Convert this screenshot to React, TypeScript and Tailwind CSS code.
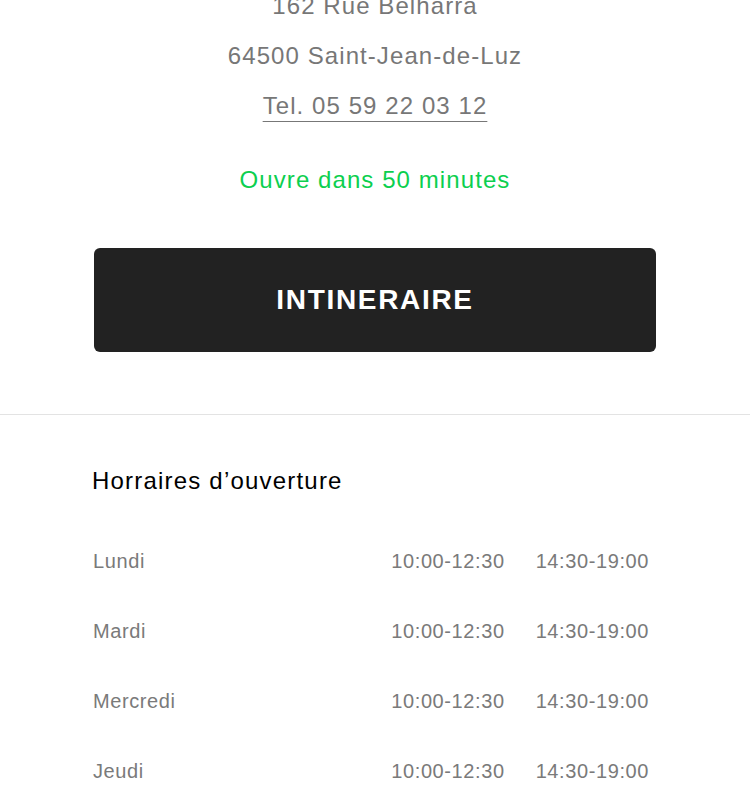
const hours = [
  { day: 'Lundi', am: '10:00-12:30', pm: '14:30-19:00' },
  { day: 'Mardi', am: '10:00-12:30', pm: '14:30-19:00' },
  { day: 'Mercredi', am: '10:00-12:30', pm: '14:30-19:00' },
  { day: 'Jeudi', am: '10:00-12:30', pm: '14:30-19:00' },
]

export default function App() {
  return (
    <div className="bg-white h-[800px] overflow-hidden font-['Liberation_Sans',Arial,sans-serif]">
      {/* store address block */}
      <section className="mt-[-19px] flex flex-col items-center text-[24px] leading-[50px] tracking-[0.045em] text-[#777]">
        <p>162 Rue Belharra</p>
        <p>64500 Saint-Jean-de-Luz</p>
        <a href="#" className="underline decoration-1 underline-offset-[7px]">
          Tel. 05 59 22 03 12
        </a>
        <p className="mt-6 text-[#0ccf4f]">Ouvre dans 50 minutes</p>
      </section>

      <div className="px-[94px] mt-[43px] pb-[62px]">
        <button className="w-full h-[104px] rounded-md bg-[#222] text-white text-[28px] leading-none font-bold tracking-[0.06em]">
          INTINERAIRE
        </button>
      </div>

      <section className="border-t border-[#e3e3e3] px-[92px] pt-[50px]">
        <h2 className="text-[24px] leading-[32px] tracking-[0.05em] text-black">Horraires d’ouverture</h2>
        <ul className="mt-[29px] pl-px pr-[9px]">
          {hours.map((h) => (
            <li key={h.day} className="h-[70px] flex items-center text-[20px] tracking-[0.03em] text-[#7a7a7a]">
              <span className="flex-1">{h.day}</span>
              <span>{h.am}</span>
              <span className="ml-[31px]">{h.pm}</span>
            </li>
          ))}
        </ul>
      </section>
    </div>
  )
}
